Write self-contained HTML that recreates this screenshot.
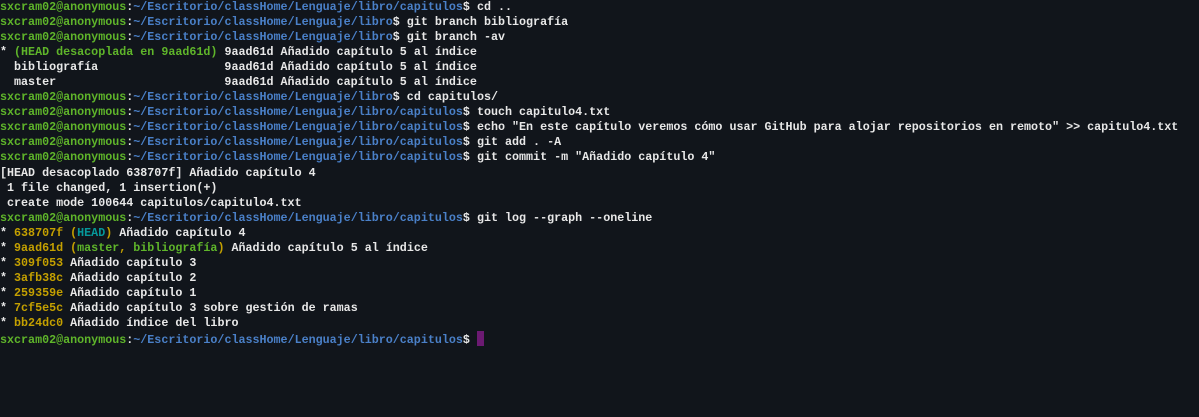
<!DOCTYPE html>
<html><head><meta charset="utf-8"><style>
html,body{margin:0;padding:0;background:#11151b;width:1199px;height:417px;overflow:hidden}
pre{margin:0;padding:0;position:absolute;top:0px;left:0;font-family:"Liberation Mono",monospace;font-weight:bold;font-size:11.7px;line-height:15.05px;color:#e8e8e8;white-space:pre}
.g{color:#5fb52a}.b{color:#4a80c8}.y{color:#c4a000}.c{color:#06989a}.w{color:#e8e8e8}
.cur{display:inline-block;width:7px;height:15px;background:#6c1a72;vertical-align:-3px}
</style></head><body><pre><span class="g">sxcram02@anonymous</span>:<span class="b">~/Escritorio/classHome/Lenguaje/libro/capitulos</span>$ cd ..
<span class="g">sxcram02@anonymous</span>:<span class="b">~/Escritorio/classHome/Lenguaje/libro</span>$ git branch bibliografía
<span class="g">sxcram02@anonymous</span>:<span class="b">~/Escritorio/classHome/Lenguaje/libro</span>$ git branch -av
* <span class="g">(HEAD desacoplada en 9aad61d)</span> 9aad61d Añadido capítulo 5 al índice
  bibliografía                  9aad61d Añadido capítulo 5 al índice
  master                        9aad61d Añadido capítulo 5 al índice
<span class="g">sxcram02@anonymous</span>:<span class="b">~/Escritorio/classHome/Lenguaje/libro</span>$ cd capitulos/
<span class="g">sxcram02@anonymous</span>:<span class="b">~/Escritorio/classHome/Lenguaje/libro/capitulos</span>$ touch capitulo4.txt
<span class="g">sxcram02@anonymous</span>:<span class="b">~/Escritorio/classHome/Lenguaje/libro/capitulos</span>$ echo "En este capítulo veremos cómo usar GitHub para alojar repositorios en remoto" >> capitulo4.txt
<span class="g">sxcram02@anonymous</span>:<span class="b">~/Escritorio/classHome/Lenguaje/libro/capitulos</span>$ git add . -A
<span class="g">sxcram02@anonymous</span>:<span class="b">~/Escritorio/classHome/Lenguaje/libro/capitulos</span>$ git commit -m "Añadido capítulo 4"
[HEAD desacoplado 638707f] Añadido capítulo 4
 1 file changed, 1 insertion(+)
 create mode 100644 capitulos/capitulo4.txt
<span class="g">sxcram02@anonymous</span>:<span class="b">~/Escritorio/classHome/Lenguaje/libro/capitulos</span>$ git log --graph --oneline
* <span class="y">638707f (</span><span class="c">HEAD</span><span class="y">)</span> Añadido capítulo 4
* <span class="y">9aad61d (</span><span class="g">master</span><span class="y">, </span><span class="g">bibliografía</span><span class="y">)</span> Añadido capítulo 5 al índice
* <span class="y">309f053</span> Añadido capítulo 3
* <span class="y">3afb38c</span> Añadido capítulo 2
* <span class="y">259359e</span> Añadido capítulo 1
* <span class="y">7cf5e5c</span> Añadido capítulo 3 sobre gestión de ramas
* <span class="y">bb24dc0</span> Añadido índice del libro
<span class="g">sxcram02@anonymous</span>:<span class="b">~/Escritorio/classHome/Lenguaje/libro/capitulos</span>$ <span class="cur"></span></pre></body></html>
